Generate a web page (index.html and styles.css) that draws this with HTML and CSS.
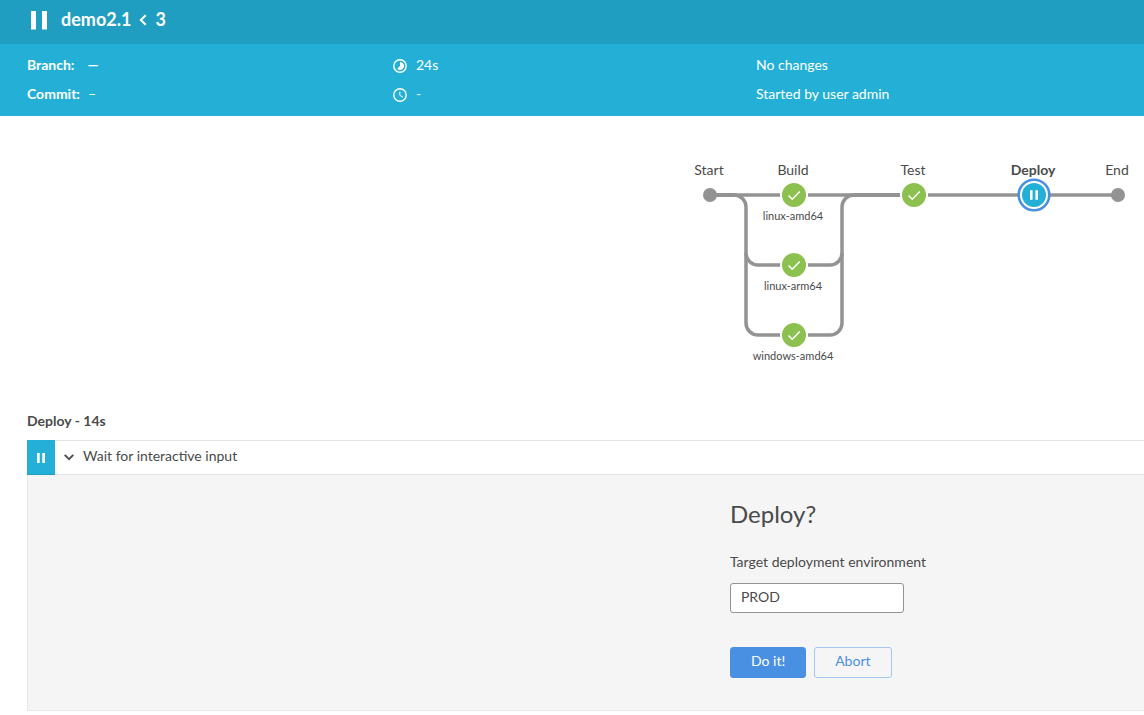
FILE: index.html
```html
<!DOCTYPE html>
<html lang="en">
<head>
<meta charset="utf-8">
<title>demo2.1 / 3</title>
<link rel="stylesheet" href="styles.css">
</head>
<body>
<header class="topbar">
  <svg class="topbar-icon" width="16" height="20" viewBox="0 0 16 20" aria-hidden="true"><path fill="#fff" d="M0 1h5v18.5H0zM11 1h5v18.5h-5z"/></svg>
  <h1 class="topbar-title">
    <span>demo2.1</span>
    <svg width="8" height="14" viewBox="0 0 8 14" aria-hidden="true"><path d="M6.7 3.2 1.8 8l4.9 4.8" fill="none" stroke="#fff" stroke-width="2"/></svg>
    <span>3</span>
  </h1>
</header>
<section class="summary">
  <div class="summary-col">
    <div class="summary-row"><b class="branch-label">Branch:</b><b>—</b></div>
    <div class="summary-row"><b class="commit-label">Commit:</b><span>–</span></div>
  </div>
  <div class="summary-col">
    <div class="summary-row">
      <svg class="meta-icon" width="14" height="14" viewBox="0 0 14 14" aria-hidden="true"><circle cx="7" cy="7" r="6.2" fill="none" stroke="#fff" stroke-width="1.4"/><path d="M7 3v4L4.2 9.8A4 4 0 1 0 7 3z" fill="#fff"/></svg>
      <span>24s</span>
    </div>
    <div class="summary-row">
      <svg class="meta-icon" width="14" height="14" viewBox="0 0 14 14" fill="none" stroke="#fff" aria-hidden="true"><circle cx="7" cy="7" r="6.2" stroke-width="1.4"/><path d="M6.8 3.5v3.8L10 9.2"/></svg>
      <span>-</span>
    </div>
  </div>
  <div class="summary-col">
    <div class="summary-row">No changes</div>
    <div class="summary-row">Started by user admin</div>
  </div>
</section>
<main>
  <section class="pipeline">
    <svg width="460" height="220" viewBox="684 150 460 220" role="img" aria-label="Pipeline stages">
      <g class="links">
        <path d="M710 195H1118"/>
        <path d="M734 195a12 12 0 0 1 12 12V323a12 12 0 0 0 12 12H830a12 12 0 0 0 12-12V207a12 12 0 0 1 12-12"/>
        <path d="M746 253a12 12 0 0 0 12 12H830a12 12 0 0 0 12-12"/>
        <path d="M710 195H734M854 195H900" class="link-trunk"/>
      </g>
      <circle class="terminal" cx="710" cy="195" r="7"/>
      <circle class="terminal" cx="1118" cy="195" r="7"/>
      <g class="passed">
        <circle cx="794" cy="195" r="13"/><path d="M788.5 195.5l3.7 3.7 7.6-7.7"/>
        <circle cx="914" cy="195" r="13"/><path d="M908.5 195.5l3.7 3.7 7.6-7.7"/>
        <circle cx="794" cy="265" r="13"/><path d="M788.5 265.5l3.7 3.7 7.6-7.7"/>
        <circle cx="794" cy="335" r="13"/><path d="M788.5 335.5l3.7 3.7 7.6-7.7"/>
      </g>
      <circle class="selected-ring" cx="1034" cy="195" r="15.3"/>
      <circle class="paused" cx="1034" cy="195" r="12"/>
      <path d="M1030 190.3h2.6v9.4h-2.6zM1035.4 190.3h2.6v9.4h-2.6z" fill="#fff"/>
      <g class="stage-labels">
        <text x="709" y="175">Start</text>
        <text x="793" y="175">Build</text>
        <text x="913" y="175">Test</text>
        <text x="1033" y="175" class="current">Deploy</text>
        <text x="1117" y="175">End</text>
      </g>
      <g class="branch-labels">
        <text x="793" y="220">linux-amd64</text>
        <text x="793" y="290">linux-arm64</text>
        <text x="793" y="360">windows-amd64</text>
      </g>
    </svg>
  </section>
  <section class="log">
    <h2 class="log-title">Deploy - 14s</h2>
    <div class="step">
      <span class="step-status"><svg width="8" height="10" viewBox="0 0 8 10" aria-hidden="true"><path fill="#fff" d="M0 0h2.7v10H0zM5.3 0H8v10H5.3z"/></svg></span>
      <button class="step-toggle" type="button" aria-expanded="true">
        <svg width="10" height="11" viewBox="0 0 10 11" aria-hidden="true"><path d="M.7 4.9 5 9.2 9.3 4.9" fill="none" stroke="#4a4a4a" stroke-width="1.8"/></svg>
        <span>Wait for interactive input</span>
      </button>
    </div>
    <div class="panel">
      <form class="input-form">
        <h3 class="form-title">Deploy?</h3>
        <label class="form-label" for="environment">Target deployment environment</label>
        <input class="form-text" id="environment" type="text" value="PROD">
        <div class="form-actions">
          <button class="btn btn-primary" type="button">Do it!</button>
          <button class="btn btn-secondary" type="button">Abort</button>
        </div>
      </form>
    </div>
  </section>
</main>
</body>
</html>
```
FILE: styles.css
```css
* { box-sizing: border-box; }
body {
  margin: 0;
  background: #fff;
  color: #4a4a4a;
  font: 14px/20px Lato, sans-serif;
}
h1, h2, h3 { margin: 0; }
svg { flex: none; }
.topbar {
  display: flex;
  align-items: center;
  gap: 14px;
  padding: 7px 31px 13px;
  background: #209ec1;
  color: #fff;
}
.topbar-icon { margin-top: 1px; }
.topbar-title {
  display: flex;
  align-items: center;
  gap: 8px;
  font-size: 18px;
  line-height: 24px;
}
.summary {
  display: grid;
  grid-template-columns: 366fr 363fr 388fr;
  padding: 11px 0 12px 27px;
  background: #24b0d6;
  color: #fff;
}
.summary-col {
  display: flex;
  flex-direction: column;
  gap: 9px;
}
.summary-row {
  display: flex;
  align-items: center;
}
.branch-label { margin-right: 13px; }
.commit-label { margin-right: 8px; }
.meta-icon { margin: 2px 9px 0 0; }
.pipeline {
  display: flex;
  justify-content: flex-end;
  padding: 34px 0 41px;
}
.links path {
  fill: none;
  stroke: #949393;
  stroke-width: 3.5;
}
.links .link-trunk { stroke-width: 4; }
.terminal { fill: #949393; }
.passed circle {
  fill: #8cc04f;
  stroke: #fff;
  stroke-width: 2;
}
.passed path {
  fill: none;
  stroke: #fff;
  stroke-width: 1.5;
}
.selected-ring {
  fill: #fff;
  stroke: #4a90e2;
  stroke-width: 2.6;
}
.paused { fill: #24b0d6; }
.stage-labels, .branch-labels {
  fill: #4a4a4a;
  text-anchor: middle;
}
.stage-labels { font-size: 14px; }
.branch-labels { font-size: 11px; }
.current { font-weight: 700; }
.log { padding-left: 27px; }
.log-title {
  margin-bottom: 9px;
  font-size: 14px;
  line-height: 20px;
}
.step {
  display: flex;
  height: 35px;
  border-top: 1px solid #e4e4e4;
  border-bottom: 1px solid #e4e4e4;
}
.step-status {
  display: flex;
  align-items: center;
  justify-content: center;
  width: 28px;
  margin: -1px 0;
  padding-top: 2px;
  background: #24b0d6;
  border-bottom: 1px solid #209ec1;
}
.step-toggle {
  display: flex;
  flex: 1;
  align-items: center;
  gap: 9px;
  padding: 0 9px 4px;
  border: 0;
  background: none;
  color: inherit;
  font: inherit;
}
.panel {
  padding: 23px 0 32px;
  border: solid #e9e9e9;
  border-width: 0 0 1px 1px;
  background: #f5f5f5;
}
.input-form {
  display: flex;
  flex-direction: column;
  align-items: flex-start;
  margin-left: 62.9%;
}
.form-title {
  margin-bottom: 22px;
  font-size: 24px;
  font-weight: 400;
  line-height: 32px;
}
.form-label { margin-bottom: 11px; }
.form-text {
  width: 174px;
  height: 30px;
  margin-bottom: 34px;
  padding: 0 10px 3px;
  border: 1px solid #949393;
  border-radius: 3px;
  background: #fff;
  color: inherit;
  font: inherit;
}
.form-actions {
  display: flex;
  gap: 8px;
}
.btn {
  height: 31px;
  padding: 0 20px 3px;
  border: 1px solid #4a90e2;
  border-radius: 3px;
  font: inherit;
}
.btn-primary {
  background: #4a90e2;
  color: #fff;
}
.btn-secondary {
  border-color: #a4c7f0;
  background: transparent;
  color: #4a90e2;
}
```
